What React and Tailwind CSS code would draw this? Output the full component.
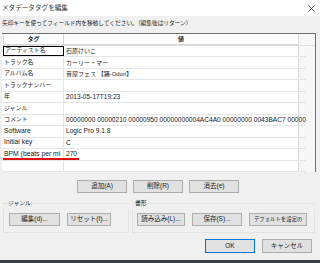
import React from "react";

const F = { fontFamily: '"Liberation Sans","Noto Sans CJK JP",sans-serif' };

const rows = [
  ["アーティスト名", "石原けいこ", true],
  ["トラック名", "カーリー・マー"],
  ["アルバム名", "音屋フェス 【踊-Odori】"],
  ["トラックナンバー:", ""],
  ["年", "2013-05-17T19:23"],
  ["ジャンル:", ""],
  ["コメント", " 00000000 00000210 00000950 00000000004AC4A0 00000000 0043BAC7 00000"],
  ["Software", "Logic Pro 9.1.8"],
  ["Initial key", "C"],
  ["BPM (beats per mi", "270"],
  ["", ""],
];

const isLatin = (s) => /^[\x00-\x7f]*$/.test(s);

function Btn({ w, children, size = "text-[6.5px]" }) {
  return (
    <div
      className={`flex items-center justify-center bg-[#e1e1e1] border leading-none text-[#222] whitespace-nowrap overflow-hidden ${size} ${w}`}
    >
      {children}
    </div>
  );
}

export default function App() {
  return (
    <div
      style={F}
      className="w-[320px] h-[263px] bg-[#f0f0f0] flex flex-col overflow-hidden border-b-[3px] border-[#3a3d42] text-[#1a1a1a] leading-none"
    >
      {/* title bar */}
      <div className="h-[16px] bg-white flex items-center justify-between pl-[2px] pr-[5px] shrink-0">
        <span className="text-[6.6px] text-[#333]">メタデータタグを編集</span>
        <svg width="7" height="7" viewBox="0 0 7 7">
          <path d="M0.5 0.5L6.5 6.5M6.5 0.5L0.5 6.5" stroke="#444" strokeWidth="0.8" />
        </svg>
      </div>
      {/* instruction */}
      <div className="h-[15px] flex items-center pl-[2px] text-[5.7px] shrink-0">
        矢印キーを使ってフィールド内を移動してください。（編集後はリターン）
      </div>
      <div className="h-[2px] shrink-0" />
      {/* list */}
      <div className="ml-[2px] w-[314px] h-[139px] border-t border-[#707070] border-r flex shrink-0 bg-[#f7f7f7]">
        <div className="w-[297px] h-[138px] bg-white flex flex-col border-r border-[#d8d8d8]">
          {/* header */}
          <div className="h-[12px] flex border-b border-[#e0e0e0] shrink-0">
            <div className="w-[61px] ml-[1px] flex items-center justify-center border-l border-r border-b border-[#d5d5d5] text-[6px] font-bold">
              タグ
            </div>
            <div className="flex-1 flex items-center justify-center border-b border-[#d5d5d5] text-[6px] font-bold">
              値
            </div>
          </div>
          <div className="flex-1 grid grid-rows-[repeat(11,minmax(0,1fr))]">
            {rows.map(([k, v, sel], i) => (
              <div key={i} className="flex border-b border-[#e4e4e4] min-h-0 relative">
                <div
                  className={`w-[61px] ml-[1px] flex items-center pl-[1px] whitespace-nowrap overflow-hidden ${
                    isLatin(k) ? "text-[6.8px]" : "text-[5.9px]"
                  } ${sel ? "border border-black" : "border-r border-[#e4e4e4]"}`}
                >
                  {k}
                </div>
                <div
                  className={`flex-1 flex items-center pl-[2px] whitespace-nowrap overflow-hidden ${
                    isLatin(v) ? "text-[6.6px]" : "text-[6px]"
                  }`}
                >
                  {v}
                </div>
                {k.startsWith("BPM") && (
                  <div className="absolute left-[1px] bottom-[0px] w-[76px] h-[1.5px] bg-[#e01010]" />
                )}
              </div>
            ))}
          </div>
        </div>
        <div className="flex-1 h-[12px] border-b border-[#e0e0e0]" />
      </div>
      <div className="h-[8px] shrink-0" />
      {/* buttons row 1 */}
      <div className="h-[13px] flex gap-[6px] pl-[77px] shrink-0">
        <Btn w="w-[50px] border-[#adadad]">追加(A)</Btn>
        <Btn w="w-[50px] border-[#adadad]">削除(R)</Btn>
        <Btn w="w-[50px] border-[#adadad]">消去(e)</Btn>
      </div>
      <div className="h-[5px] shrink-0" />
      {/* groups */}
      <div className="h-[35px] flex shrink-0">
        <div className="ml-[3px] w-[126px] flex flex-col">
          <div className="flex items-center h-[11px]">
            <div className="w-[4px] border-t border-[#e2e2e2]" />
            <span className="text-[5.8px] px-[1px]">ジャンル:</span>
            <div className="flex-1 border-t border-[#e2e2e2]" />
          </div>
          <div className="flex-1 border-l border-r border-b border-[#e2e2e2] flex items-start gap-[7px] pl-[5px] pt-[4px]">
            <Btn w="w-[51px] h-[13px] border-[#adadad]">編集(d)...</Btn>
            <Btn w="w-[44px] h-[13px] border-[#adadad]">リセット(t)...</Btn>
          </div>
        </div>
        <div className="ml-[3px] w-[183px] flex flex-col">
          <div className="flex items-center h-[11px]">
            <div className="w-[2px] border-t border-[#e2e2e2]" />
            <span className="text-[5.8px] px-[1px]">書形</span>
            <div className="flex-1 border-t border-[#e2e2e2]" />
          </div>
          <div className="flex-1 border-l border-r border-b border-[#e2e2e2] flex items-start gap-[7px] pl-[4px] pt-[4px]">
            <Btn w="w-[48px] h-[13px] border-[#adadad]">読み込み(L)...</Btn>
            <Btn w="w-[50px] h-[13px] border-[#adadad]">保存(S)...</Btn>
            <Btn w="w-[58px] h-[13px] border-[#adadad]" size="text-[5.4px]">デフォルトを設定(f)</Btn>
          </div>
        </div>
      </div>
      <div className="h-[6px] shrink-0" />
      {/* OK / cancel */}
      <div className="h-[14px] flex gap-[7px] pl-[205px] shrink-0">
        <Btn w="w-[50px] border-[#0078d7]">OK</Btn>
        <Btn w="w-[50px] border-[#adadad]">キャンセル</Btn>
      </div>
    </div>
  );
}
